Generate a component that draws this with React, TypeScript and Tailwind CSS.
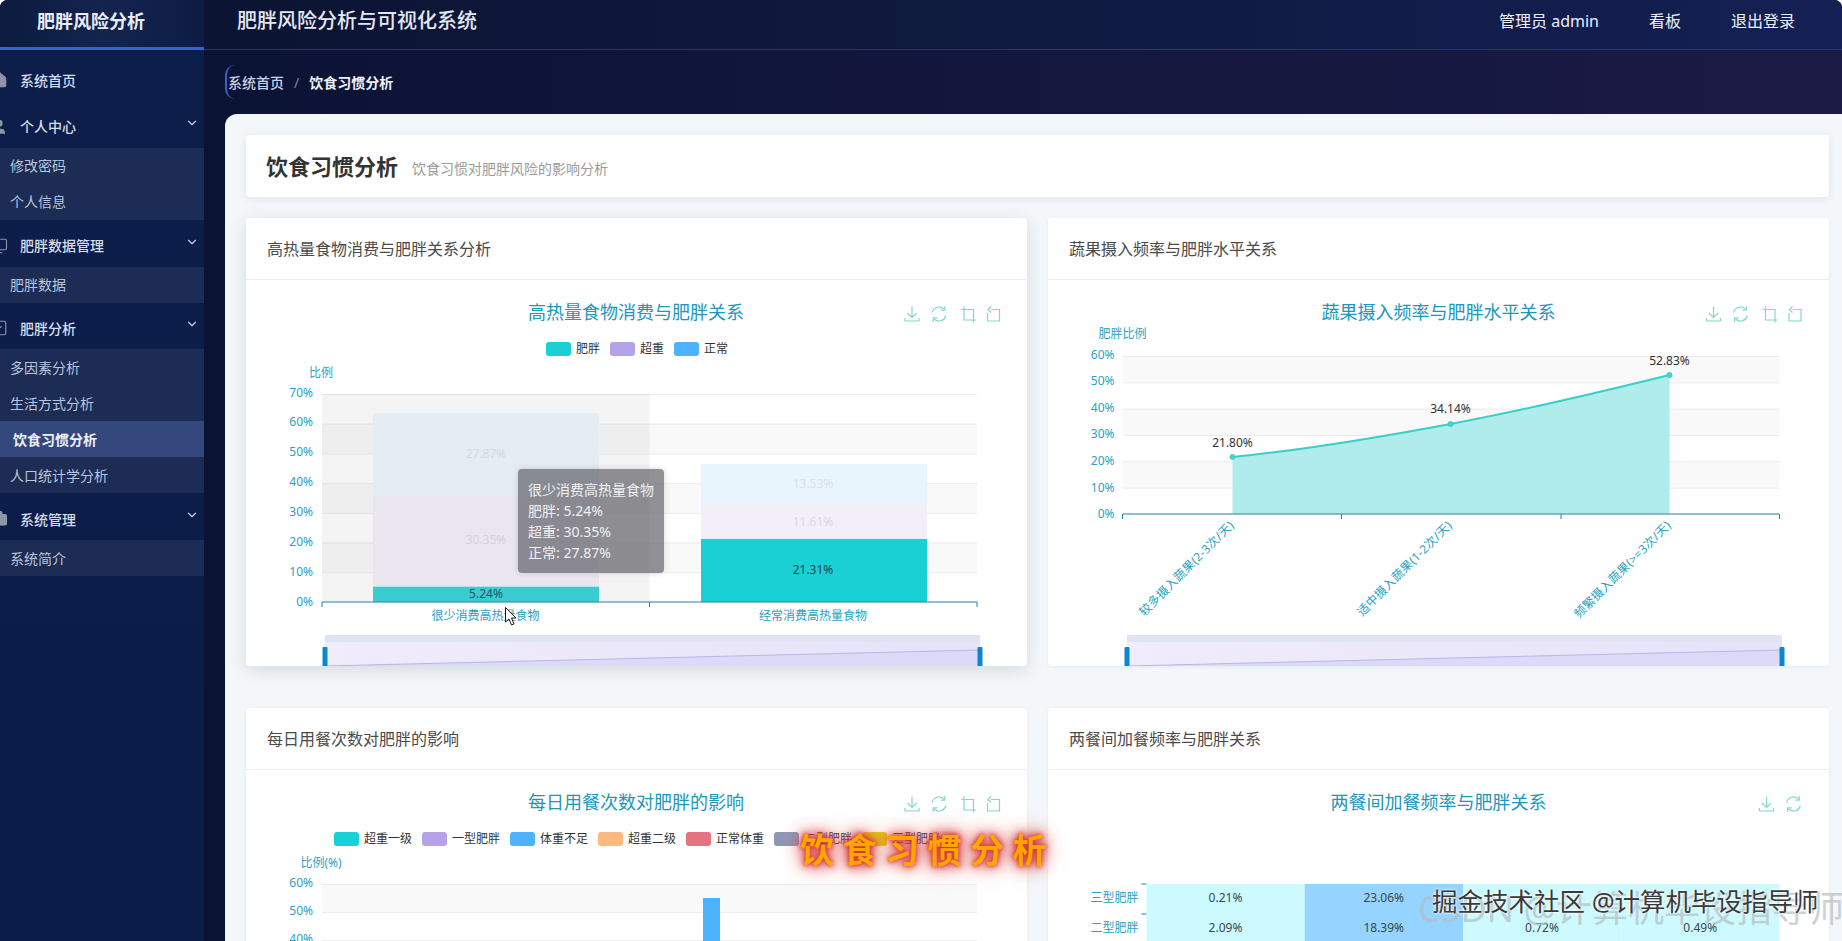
import { ChevronDown, Home, User, Monitor, SquareCheck, Briefcase } from 'lucide-react';

const menu = [
    { title: '系统首页', icon: Home, fill: true },
    { title: '个人中心', icon: User, fill: true, subs: ['修改密码', '个人信息'] },
    { title: '肥胖数据管理', icon: Monitor, subs: ['肥胖数据'] },
    { title: '肥胖分析', icon: SquareCheck, subs: ['多因素分析', '生活方式分析', '饮食习惯分析', '人口统计学分析'] },
    { title: '系统管理', icon: Briefcase, fill: true, subs: ['系统简介'] },
];

const TITLE = '#2096ba';
const AXIS = '#2a9fc2';
const ICON = '#84d6cf';

function Sidebar() {
    return (
        <aside className="w-[204px] shrink-0 h-full overflow-hidden bg-gradient-to-b from-[#0e1e4a] to-[#0c1c48]">
            <div className="h-[50px] flex items-center justify-center border-b-[3px] border-[#3a62cc] bg-gradient-to-r from-[#0c1a3e] via-[#13244f] to-[#0e1c44] pr-[22px] pb-[5px]">
                <span className="text-[18px] font-bold text-[#e8edf6]">肥胖风险分析</span>
            </div>
            <nav className="pt-[9px]">
                {menu.map(m => {
                    const Icon = m.icon;
                    return (
                        <div key={m.title} className="mb-[4.75px]">
                            <div className="h-[42px] flex items-center text-[14px] text-[#d5dcea] font-medium">
                                <Icon size={18} className="-ml-[10px] mr-[12px] shrink-0 text-[#8d95a8]" fill={m.fill ? '#8d95a8' : 'none'} strokeWidth={1.5} />
                                <span className="flex-1">{m.title}</span>
                                {m.subs && <ChevronDown size={14} className="mr-[5px] -translate-y-[4px] text-[#c6d0e2]" />}
                            </div>
                            {m.subs && (
                                <div className="bg-[#1c2c54]">
                                    {m.subs.map(s => (
                                        <div
                                            key={s}
                                            className={
                                                s === '饮食习惯分析'
                                                    ? 'h-[36px] flex items-center pl-[13px] text-[14px] font-bold text-[#eef2fa] bg-[#33477c]'
                                                    : 'h-[36px] flex items-center pl-[10px] text-[14px] text-[#b9c5dc]'
                                            }
                                        >
                                            {s}
                                        </div>
                                    ))}
                                </div>
                            )}
                        </div>
                    );
                })}
            </nav>
        </aside>
    );
}

function Toolbox({ x, y, only2 }: { x: number[]; y: number; only2?: boolean }) {
    return (
        <g fill="none" stroke={ICON} strokeWidth="1.2">
            <g transform={`translate(${x[0] - 8} ${y - 8})`}>
                <path d="M8 0.5V11.5M3.5 7L8 11.5L12.5 7M1 12V15H15V12" />
            </g>
            <g transform={`translate(${x[1] - 8} ${y - 8})`}>
                <path d="M1.2 6.5A7 7 0 0 1 13.2 3.3M14.8 9.5A7 7 0 0 1 2.8 12.7" />
                <path d="M13.8 0V4.2H9.8M2.2 16V11.8H6.2" />
            </g>
            {!only2 && (
                <>
                    <g transform={`translate(${x[2] - 8} ${y - 8})`}>
                        <path d="M3.5 0V14H15.5M0.5 3.5H13V16.5" />
                    </g>
                    <g transform={`translate(${x[3] - 8} ${y - 8})`}>
                        <path d="M5.5 3.5H14V15H2V7" />
                        <path d="M5.5 0.5L2.5 3.5L5.5 6.5" />
                    </g>
                </>
            )}
        </g>
    );
}

function YAxis({ labels, top, step, x0, x1, labelX }: { labels: number[]; top: number; step: number; x0: number; x1: number; labelX: number }) {
    return (
        <g>
            {labels.map((v, i) => {
                const y = top + i * step;
                return (
                    <g key={v}>
                        {i < labels.length - 1 && (v === 60 || v === 40 || v === 20) ? <rect x={x0} y={y} width={x1 - x0} height={step} fill="#f9f9fa" /> : null}
                        {i < labels.length - 1 && <line x1={x0} x2={x1} y1={y + 0.5} y2={y + 0.5} stroke="#ebecef" />}
                        <text x={labelX} y={y - 2 + (2 * i) / (labels.length - 1)} fontSize="12" textAnchor="end" dominantBaseline="central" fill={AXIS}>
                            {v}%
                        </text>
                    </g>
                );
            })}
        </g>
    );
}

function XAxisLine({ y, ticks }: { y: number; ticks: number[] }) {
    return (
        <g stroke="#1e86a6">
            <line x1={ticks[0]} x2={ticks[ticks.length - 1]} y1={y} y2={y} strokeWidth="1.2" />
            {ticks.map(t => (
                <line key={t} x1={t} x2={t} y1={y} y2={y + 5} />
            ))}
        </g>
    );
}

function DataZoom({ x0, x1, id }: { x0: number; x1: number; id: string }) {
    return (
        <g>
            <defs>
                <linearGradient id={id} x1="0" x2="1" y1="0" y2="0">
                    <stop offset="0" stopColor="#f0ecfb" />
                    <stop offset="1" stopColor="#e6e3fa" />
                </linearGradient>
            </defs>
            <rect x={x0} y={355} width={x1 - x0} height={7} fill="#dfe4f2" />
            <rect x={x0} y={362} width={x1 - x0} height={24} fill={`url(#${id})`} />
            <polygon points={`${x0},386 ${x1},370 ${x1},386`} fill="#dcdaf8" />
            <line x1={x0} y1={386} x2={x1} y2={370} stroke="#b9b5e6" />
            <rect x={x0 - 2.5} y={367} width={5} height={22} rx={1} fill="#0b87d0" />
            <rect x={x1 - 2.5} y={367} width={5} height={22} rx={1} fill="#0b87d0" />
        </g>
    );
}

function Legend({ items }: { items: { x: number; name: string; color: string }[] }) {
    return (
        <g>
            {items.map(it => (
                <g key={it.name}>
                    <rect x={it.x} y={62} width={25} height={14} rx={3} fill={it.color} />
                    <text x={it.x + 30} y={68} fontSize="12" dominantBaseline="central" fill="#333">
                        {it.name}
                    </text>
                </g>
            ))}
        </g>
    );
}

function ChartTitle({ x, y, text }: { x: number; y: number; text: string }) {
    return (
        <text x={x} y={y} fontSize="18" textAnchor="middle" dominantBaseline="central" fill={TITLE}>
            {text}
        </text>
    );
}

function AxisName({ x, y, text }: { x: number; y: number; text: string }) {
    return (
        <text x={x} y={y} fontSize="12" textAnchor="middle" dominantBaseline="central" fill={AXIS}>
            {text}
        </text>
    );
}

const bar = (pct: number) => pct * 2.971;

function FoodChart() {
    return (
        <div className="relative h-[386px]">
            <svg width="781" height="386" className="block">
                <ChartTitle x={390} y={32} text="高热量食物消费与肥胖关系" />
                <Toolbox x={[666, 693, 722.5, 747.5]} y={34} />
                <Legend
                    items={[
                        { x: 300, name: '肥胖', color: '#19d0d4' },
                        { x: 364, name: '超重', color: '#b6a2e9' },
                        { x: 428, name: '正常', color: '#4db3ff' },
                    ]}
                />
                <AxisName x={75} y={92} text="比例" />
                <YAxis labels={[70, 60, 50, 40, 30, 20, 10, 0]} top={114} step={29.71} x0={76} x1={731} labelX={67} />
                <rect x={76} y={114} width={327.5} height={208} fill="#969696" opacity="0.1" />

                <rect x={127} y={322 - bar(5.24)} width={226} height={bar(5.24)} fill="#3accd0" />
                <rect x={127} y={322 - bar(35.59)} width={226} height={bar(30.35)} fill="#e9e6f0" />
                <rect x={127} y={322 - bar(63.46)} width={226} height={bar(27.87)} fill="#e4ecf4" />
                <text x={240} y={313} fontSize="12" textAnchor="middle" dominantBaseline="central" fill="#27555c">5.24%</text>
                <text x={240} y={259} fontSize="12" textAnchor="middle" dominantBaseline="central" fill="#d4d1dc">30.35%</text>
                <text x={240} y={173} fontSize="12" textAnchor="middle" dominantBaseline="central" fill="#d5dbe3">27.87%</text>

                <rect x={455} y={322 - bar(21.31)} width={226} height={bar(21.31)} fill="#19d0d4" />
                <rect x={455} y={322 - bar(32.92)} width={226} height={bar(11.61)} fill="#f2eff9" />
                <rect x={455} y={322 - bar(46.45)} width={226} height={bar(13.53)} fill="#e9f5fc" />
                <text x={567} y={289} fontSize="12" textAnchor="middle" dominantBaseline="central" fill="#1f4650">21.31%</text>
                <text x={567} y={241} fontSize="12" textAnchor="middle" dominantBaseline="central" fill="#dcd8ea">11.61%</text>
                <text x={567} y={203} fontSize="12" textAnchor="middle" dominantBaseline="central" fill="#d8e3ea">13.53%</text>

                <XAxisLine y={322} ticks={[76, 403.5, 731]} />
                <text x={239.5} y={335} fontSize="12" textAnchor="middle" dominantBaseline="central" fill={AXIS}>很少消费高热量食物</text>
                <text x={567} y={335} fontSize="12" textAnchor="middle" dominantBaseline="central" fill={AXIS}>经常消费高热量食物</text>
                <DataZoom x0={79} x1={734} id="dz1" />
                <g fill="#fff" stroke="#1a1a1a" strokeWidth="1" transform="translate(259 327)">
                    <path d="M0.5 0.5V15L4 12L6.5 18L9 17L6.5 11H11Z" />
                </g>
            </svg>
            <div className="absolute left-[272px] top-[189px] w-[146px] h-[104px] rounded-[4px] bg-[#58585e]/65 px-[10px] py-[10px] text-[14px] leading-[21px] text-[#f0f0f2] shadow-[0_0_6px_rgba(0,0,0,0.15)]">
                <div>很少消费高热量食物</div>
                <div>肥胖: 5.24%</div>
                <div>超重: 30.35%</div>
                <div>正常: 27.87%</div>
            </div>
        </div>
    );
}

function VegChart() {
    const pts = [
        { x: 184.5, y: 177, v: '21.80%', ly: 162, label: '较多摄入蔬果(2-3次/天)' },
        { x: 402.5, y: 144, v: '34.14%', ly: 128, label: '适中摄入蔬果(1-2次/天)' },
        { x: 621.5, y: 95, v: '52.83%', ly: 80, label: '频繁摄入蔬果(>=3次/天)' },
    ];
    const curve = 'M184.5 177C256.5 170 330.5 157.5 402.5 144C475.5 130.3 548.5 113 621.5 95';
    return (
        <svg width="780" height="386" className="block">
            <ChartTitle x={390.5} y={32} text="蔬果摄入频率与肥胖水平关系" />
            <Toolbox x={[665.5, 692.5, 722, 747]} y={34} />
            <AxisName x={74.5} y={53} text="肥胖比例" />
            <YAxis labels={[60, 50, 40, 30, 20, 10, 0]} top={76} step={26.33} x0={74.5} x1={731.5} labelX={66.5} />
            <path d={`${curve}V234H184.5Z`} fill="#b0ecec" />
            <path d={curve} fill="none" stroke="#37cfc8" strokeWidth="2" />
            {pts.map(p => (
                <g key={p.v}>
                    <circle cx={p.x} cy={p.y} r="2.5" fill="#4ad4cd" stroke="#37cfc8" />
                    <text x={p.x} y={p.ly} fontSize="12" textAnchor="middle" dominantBaseline="central" fill="#333">{p.v}</text>
                    <text
                        x={p.x - 1}
                        y={243}
                        fontSize="12"
                        letterSpacing="0.2"
                        textAnchor="end"
                        dominantBaseline="central"
                        fill={AXIS}
                        transform={`rotate(-45 ${p.x - 1} 243)`}
                    >
                        {p.label}
                    </text>
                </g>
            ))}
            <XAxisLine y={234} ticks={[74.5, 293.5, 513, 731.5]} />
            <DataZoom x0={79} x1={734} id="dz2" />
        </svg>
    );
}

function MealChart() {
    const legend = [
        ['超重一级', '#19d0d4'],
        ['一型肥胖', '#b6a2e9'],
        ['体重不足', '#4db3ff'],
        ['超重二级', '#ffb980'],
        ['正常体重', '#e5737f'],
        ['二型肥胖', '#8d98b3'],
        ['三型肥胖', '#e5cf0d'],
    ];
    return (
        <svg width="781" height="386" className="block">
            <ChartTitle x={390} y={32} text="每日用餐次数对肥胖的影响" />
            <Toolbox x={[666, 693, 722.5, 747.5]} y={34} />
            <Legend items={legend.map((l, i) => ({ x: 88 + i * 88, name: l[0], color: l[1] }))} />
            <AxisName x={75} y={92} text="比例(%)" />
            <YAxis labels={[60, 50, 40, 30, 20, 10, 0]} top={114} step={28} x0={76} x1={731} labelX={67} />
            <rect x={457} y={128} width={17} height={154} fill="#4db3ff" />
            <XAxisLine y={282} ticks={[76, 731]} />
        </svg>
    );
}

function SnackChart() {
    const rows = [
        { name: '三型肥胖', y: 114, cells: ['0.21%', '23.06%', '', ''] },
        { name: '二型肥胖', y: 144, cells: ['2.09%', '18.39%', '0.72%', '0.49%'] },
    ];
    return (
        <svg width="780" height="386" className="block">
            <ChartTitle x={390.5} y={32} text="两餐间加餐频率与肥胖关系" />
            <Toolbox x={[718.5, 745.5]} y={34} only2 />
            {rows.map(r => (
                <g key={r.name}>
                    <line x1={93.5} x2={98.5} y1={r.y} y2={r.y} stroke="#1e86a6" />
                    <text x={90.5} y={r.y + 13} fontSize="12" textAnchor="end" dominantBaseline="central" fill={AXIS}>{r.name}</text>
                    {r.cells.map((c, i) => (
                        <g key={i}>
                            <rect x={98.5 + i * 158.25} y={r.y} width={158.25} height={30} fill={i === 1 ? '#94d4ff' : '#ccfaff'} />
                            <text x={98.5 + i * 158.25 + 79} y={r.y + 13} fontSize="12" textAnchor="middle" dominantBaseline="central" fill="#37474f">{c}</text>
                        </g>
                    ))}
                </g>
            ))}
        </svg>
    );
}

function Card({ title, raised, children }: { title: string; raised?: boolean; children: React.ReactNode }) {
    return (
        <section className={raised ? 'h-[448px] overflow-hidden rounded-[4px] bg-white shadow-[0_4px_18px_rgba(0,0,0,0.12)]' : 'h-[448px] overflow-hidden rounded-[4px] bg-white shadow-[0_1px_4px_rgba(0,0,0,0.06)]'}>
            <div className="h-[62px] flex items-center px-[21px] border-b border-[#ebeef5] text-[16px] text-[#4a4a4a]">{title}</div>
            {children}
        </section>
    );
}

export default function App() {
    return (
        <div className="relative h-screen overflow-hidden flex rounded-t-[8px] bg-[#0a1333] font-['Noto_Sans','Noto_Sans_CJK_SC',sans-serif]">
            <Sidebar />
            <div className="flex-1 min-w-0 flex flex-col bg-gradient-to-r from-[#0b1335] to-[#1b1a45]">
                <header className="h-[50px] shrink-0 flex items-center justify-between pl-[33px] pr-[47px] pb-[8px] border-b border-[#2a3566] bg-gradient-to-r from-[#0c1433] via-[#0f1a40] to-[#141f54]">
                    <h1 className="text-[20px] font-medium text-[#e4e8f2]">肥胖风险分析与可视化系统</h1>
                    <div className="flex items-center gap-[50px] text-[16px] text-[#eceff6]">
                        <span>管理员 admin</span>
                        <span>看板</span>
                        <span>退出登录</span>
                    </div>
                </header>
                <div className="h-[64px] shrink-0 flex items-center pl-[21px]">
                    <div className="h-[34px] flex items-center pl-[1px] rounded-l-[10px] border-l-[2px] border-[#3a62cc] text-[14px]">
                        <span className="font-medium text-[#c9d2e4]">系统首页</span>
                        <span className="mx-[10px] text-[#7d86a0]">/</span>
                        <span className="font-bold text-[#eef1f8]">饮食习惯分析</span>
                    </div>
                </div>
                <main className="flex-1 min-h-0 overflow-hidden rounded-tl-[12px] bg-[#f4f7fa] ml-[21px] pl-[21px] pr-[13px] pt-[21px]">
                    <div className="h-[62px] flex items-center pl-[20px] rounded-[4px] bg-white shadow-[0_2px_8px_rgba(0,0,0,0.08)]">
                        <h2 className="text-[22px] font-bold text-[#333]">饮食习惯分析</h2>
                        <span className="ml-[14px] mt-[4px] text-[14px] text-[#9a9a9a]">饮食习惯对肥胖风险的影响分析</span>
                    </div>
                    <div className="mt-[21px] grid grid-cols-2 gap-x-[21px] gap-y-[42px]">
                        <Card title="高热量食物消费与肥胖关系分析" raised><FoodChart /></Card>
                        <Card title="蔬果摄入频率与肥胖水平关系"><VegChart /></Card>
                        <Card title="每日用餐次数对肥胖的影响"><MealChart /></Card>
                        <Card title="两餐间加餐频率与肥胖关系"><SnackChart /></Card>
                    </div>
                </main>
            </div>
            {/* video overlays burnt into the capture */}
            <div className="absolute left-[800px] top-[830px] text-[34px] font-bold leading-[40px] tracking-[8.5px] text-[#ffa500] [text-shadow:0_0_4px_#d32f2f,0_0_10px_#d32f2f,0_0_16px_#d84343,0_0_24px_#e57373]">
                饮食习惯分析
            </div>
            <div className="absolute left-[1418px] top-[886px] whitespace-nowrap text-[36px] leading-[46px] text-[#b4bcc2]/70">
                CSDN @计算机毕设指导师
            </div>
            <div className="absolute left-[1432px] top-[883px] whitespace-nowrap text-[25.5px] leading-[36px] text-[#3a3a3a] [text-shadow:0_0_2px_#fff,0_0_3px_#fff]">
                掘金技术社区 @计算机毕设指导师
            </div>
        </div>
    );
}
